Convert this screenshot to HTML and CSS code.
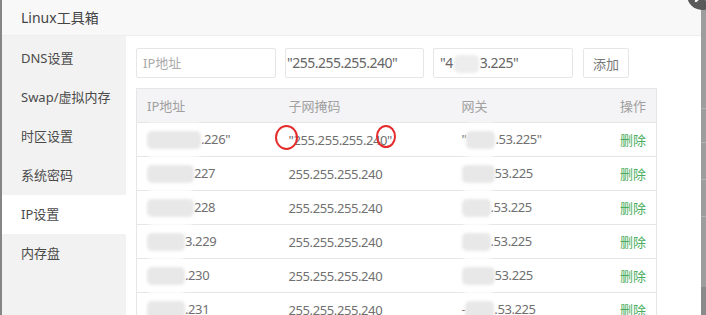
FILE: index.html
```html
<!DOCTYPE html>
<html lang="zh-CN">
<head>
<meta charset="utf-8">
<title>Linux工具箱</title>
<link rel="stylesheet" href="styles.css">
</head>
<body>
<div class="page">
  <div class="shade-left"></div>
  <div class="dialog">
    <div class="dialog-title">Linux工具箱</div>
    <div class="dialog-body">
      <ul class="nav">
        <li class="nav-item">DNS设置</li>
        <li class="nav-item">Swap/虚拟内存</li>
        <li class="nav-item">时区设置</li>
        <li class="nav-item">系统密码</li>
        <li class="nav-item active">IP设置</li>
        <li class="nav-item">内存盘</li>
      </ul>
      <div class="content">
        <div class="form-row">
          <div class="input placeholder">IP地址</div>
          <div class="input tight">"255.255.255.240"</div>
          <div class="input">"4<span class="blob blob-in"></span>3.225"</div>
          <button class="btn">添加</button>
        </div>
        <table class="tbl">
          <colgroup>
            <col class="c1"><col class="c2"><col class="c3"><col class="c4">
          </colgroup>
          <thead>
            <tr><th>IP地址</th><th>子网掩码</th><th>网关</th><th class="op">操作</th></tr>
          </thead>
          <tbody>
            <tr>
              <td><span class="blob b54"></span>.226"</td>
              <td>"255.255.255.240"</td>
              <td>"<span class="blob g28"></span>.53.225"</td>
              <td class="op"><a class="del">删除</a></td>
            </tr>
            <tr>
              <td><span class="blob b47"></span>227</td>
              <td>255.255.255.240</td>
              <td><span class="blob g30"></span>53.225</td>
              <td class="op"><a class="del">删除</a></td>
            </tr>
            <tr>
              <td><span class="blob b47"></span>228</td>
              <td>255.255.255.240</td>
              <td><span class="blob g27"></span>.53.225</td>
              <td class="op"><a class="del">删除</a></td>
            </tr>
            <tr>
              <td><span class="blob b38"></span>3.229</td>
              <td>255.255.255.240</td>
              <td><span class="blob g27"></span>.53.225</td>
              <td class="op"><a class="del">删除</a></td>
            </tr>
            <tr>
              <td><span class="blob b38"></span>.230</td>
              <td>255.255.255.240</td>
              <td><span class="blob g30"></span>53.225</td>
              <td class="op"><a class="del">删除</a></td>
            </tr>
            <tr>
              <td><span class="blob b38"></span>.231</td>
              <td>255.255.255.240</td>
              <td>-<span class="blob g27"></span>.53.225</td>
              <td class="op"><a class="del">删除</a></td>
            </tr>
          </tbody>
        </table>
      </div>
    </div>
    <span class="mark mark-1"></span>
    <span class="mark mark-2"></span>
  </div>
  <div class="shade-right"></div>
  <span class="close-btn">
    <svg viewBox="0 0 30 30" width="30" height="30"><path d="M9 9 L21 21 M21 9 L9 21" stroke="#fff" stroke-width="2.4" fill="none" stroke-linecap="round"/></svg>
  </span>
</div>
</body>
</html>
```

FILE: styles.css
```css
* { box-sizing: border-box; }
html, body { margin: 0; padding: 0; }
body {
  width: 706px;
  height: 315px;
  overflow: hidden;
  background: #8d8d8d;
  font-family: "Noto Sans", "Noto Sans CJK SC", sans-serif;
}
.page {
  position: relative;
  display: flex;
  width: 706px;
  height: 315px;
  overflow: hidden;
}
.shade-left {
  width: 2px;
  flex: none;
  background: #858585;
}
.dialog {
  position: relative;
  width: 699px;
  flex: none;
  background: #fff;
  display: flex;
  flex-direction: column;
}
.shade-right {
  flex: 1;
  background:
    linear-gradient(#b3b3b3, #b3b3b3) 0 108px / 100% 1px no-repeat,
    linear-gradient(#b3b3b3, #b3b3b3) 0 142px / 100% 1px no-repeat,
    linear-gradient(#b3b3b3, #b3b3b3) 0 179px / 100% 1px no-repeat,
    linear-gradient(#b3b3b3, #b3b3b3) 0 216px / 100% 1px no-repeat,
    linear-gradient(#8a8a8a, #8a8a8a) 0 287px / 100% 28px no-repeat,
    #9d9d9d;
}
.dialog-title {
  height: 36px;
  line-height: 35px;
  padding-left: 19px;
  background: #f8f8f8;
  border-bottom: 1px solid #eee;
  font-size: 14px;
  color: #444;
  flex: none;
}
.dialog-body {
  flex: 1;
  display: flex;
  min-height: 0;
}
.nav {
  list-style: none;
  margin: 0;
  padding: 3px 0 0;
  width: 124px;
  flex: none;
  background: #f2f2f2;
}
.nav-item {
  height: 39px;
  line-height: 39px;
  padding-left: 19px;
  font-size: 13px;
  color: #4a4a4a;
}
.nav-item.active { background: #fff; }
.content {
  flex: 1;
  padding: 12px 0 0 10px;
}
.form-row {
  display: flex;
  gap: 9px;
  height: 30px;
}
.input {
  width: 140px;
  height: 30px;
  border: 1px solid #e6e6e6;
  border-radius: 2px;
  padding-left: 6px;
  font-size: 14px;
  letter-spacing: -0.5px;
  line-height: 28px;
  color: #666;
  white-space: nowrap;
  overflow: hidden;
}
.input.tight { padding-left: 1px; width: 139px; }
.input.placeholder { font-size: 13px; color: #aaa; letter-spacing: 0; }
.btn {
  margin-left: 1px;
  width: 46px;
  height: 30px;
  border: 1px solid #e6e6e6;
  border-radius: 2px;
  background: #fff;
  font: 13px "Noto Sans", "Noto Sans CJK SC", sans-serif;
  color: #777;
  padding: 0;
}
.tbl {
  margin-top: 10px;
  width: 520px;
  border-collapse: collapse;
  table-layout: fixed;
  border: 1px solid #e6e6e6;
  font-size: 13px;
  letter-spacing: -0.4px;
}
.c1 { width: 142px; }
.c2 { width: 173px; }
.c3 { width: 125px; }
.c4 { width: 80px; }
.tbl th, .tbl td {
  height: 34px;
  padding: 0 10px;
  border-bottom: 1px solid #e6e6e6;
  text-align: left;
  white-space: nowrap;
  overflow: visible;
}
.tbl th {
  background: #f4f4f6;
  font-weight: normal;
  color: #a0a0a0;
  letter-spacing: 0;
}
.tbl td { color: #707070; }
.tbl .op { text-align: right; }
.del { color: #4aad5c; letter-spacing: 0; }
.blob {
  display: inline-block;
  height: 18px;
  vertical-align: middle;
  background: #e8e8e8;
  border-radius: 5px;
  filter: blur(1.6px);
  box-shadow: 0 -8px 0 #fff, 0 8px 0 #fff;
}
.blob-in { width: 25px; box-shadow: none; background: #ededed; margin: 0 1px; }
.b54 { width: 54px; }
.b47 { width: 47px; }
.b38 { width: 38px; }
.g28 { width: 29px; }
.g30 { width: 33px; }
.g27 { width: 29px; }
.mark {
  position: absolute;
  border: 2px solid #e52b2b;
  border-radius: 50%;
}
.mark-1 { left: 273px; top: 125px; width: 23px; height: 25px; }
.mark-2 { left: 374px; top: 125px; width: 20px; height: 23px; }
.close-btn {
  position: absolute;
  left: 687px;
  top: -20px;
  width: 30px;
  height: 30px;
  border-radius: 50%;
  background: #5a5a5a;
}
.close-btn svg { display: block; }
```
